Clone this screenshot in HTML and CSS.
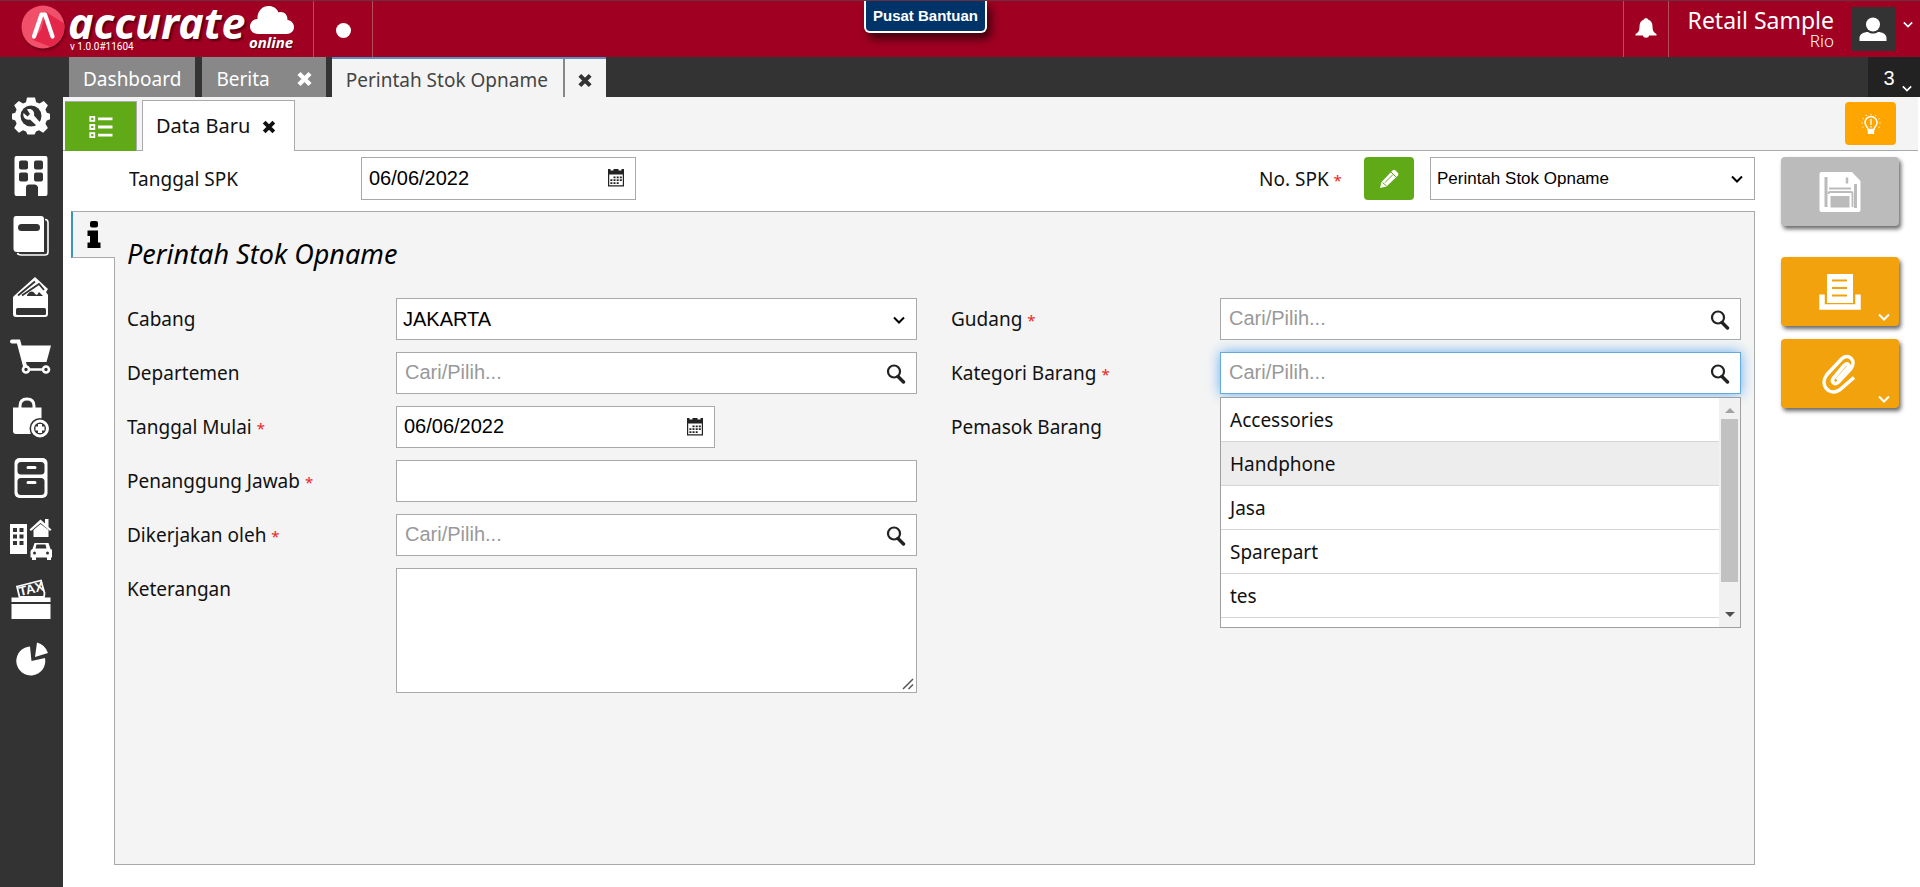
FILE: index.html
```html
<!DOCTYPE html>
<html lang="id">
<head>
<meta charset="utf-8">
<title>Accurate Online - Perintah Stok Opname</title>
<meta name="viewport" content="width=device-width, initial-scale=1">
<link rel="stylesheet" href="styles.css">
</head>
<body>
<svg class="sprite" aria-hidden="true">
  <symbol id="i-chevron" viewBox="0 0 12 8"><path d="M1 1.5 6 6.5 11 1.5" fill="none" stroke="currentColor" stroke-width="2"/></symbol>
  <symbol id="i-search" viewBox="0 0 20 20"><circle cx="8" cy="7.5" r="6" fill="none" stroke="currentColor" stroke-width="2.2"/><path d="M12 12.5 17.5 18" stroke="currentColor" stroke-width="3.4" stroke-linecap="round"/></symbol>
  <symbol id="i-close" viewBox="0 0 16 16"><path d="M2.500 2.500 13.500 13.500M13.500 2.500 2.500 13.500" stroke="currentColor" stroke-width="4.400"/></symbol>
  <symbol id="i-calendar" viewBox="0 0 18 19"><path d="M1 1h2.500v1.500h3V1h5v1.500h3V1H17v17.500H1zM2.200 6.500v10.800h13.600V6.500z" fill="currentColor" fill-rule="evenodd"/><path d="M6.500 8.500h2v1.800h-2zM9.700 8.500h2v1.800h-2zM12.800 8.500h2v1.800h-2zM3.400 11.300h2v1.800h-2zM6.500 11.300h2v1.800h-2zM9.700 11.300h2v1.800h-2zM12.800 11.300h2v1.800h-2zM3.400 14.200h2V16h-2zM6.500 14.200h2V16h-2zM9.700 14.200h2V16h-2z" fill="currentColor"/></symbol>
</svg>

<header class="topbar">
  <a class="logo" href="#" aria-label="Accurate Online">
    <svg class="logo-mark" viewBox="0 0 44 44"><defs><clipPath id="disc"><circle cx="22" cy="22" r="21.500"/></clipPath></defs><g clip-path="url(#disc)"><path d="M0 0h44v44H0z" fill="#f0506a"/><path d="M25 7 44 19v16l-9 9-23-9 8-10z" fill="#e3264a"/></g><path d="M13 31.500 20.500 9.500h3.500L31.500 31.500" fill="none" stroke="#fff" stroke-width="4.200" stroke-linecap="round" stroke-linejoin="round"/></svg>
    <span class="logo-words"><span class="logo-name">accurate</span><span class="logo-version">v 1.0.0#11604</span></span>
    <span class="logo-side"><svg class="logo-cloud" viewBox="0 0 46 30"><path d="M9.500 29C4 29 1 25.500 1 21.500 1 17 4.500 14 8.500 14 8 6 13.500 1 19.500 1c5 0 8.500 2.500 10 6.500 5-1.500 9 1.500 9 7.500 4 .5 6.500 3.500 6.500 7 0 4-3 7-7.500 7z" fill="#fff"/></svg><span class="logo-online">online</span></span>
  </a>
  <div class="status"><span class="status-dot"></span></div>
  <button class="help" type="button">Pusat Bantuan</button>
  <button class="bell" type="button" aria-label="Notifikasi"><svg width="22" height="22" viewBox="0 0 22 22"><path d="M9 2.500C9 .8 13 .8 13 2.500c3 1 4.500 3.500 4.500 7 0 4 1 6 4 7.500v1.500H14c0 3-6 3-6 0H.5V17c3-1.500 4-3.500 4-7.500 0-3.500 1.500-6 4.500-7z" fill="#fff"/></svg></button>
  <div class="account"><span class="account-company">Retail Sample</span><span class="account-user">Rio</span></div>
  <button class="avatar" type="button" aria-label="Akun"><svg width="28" height="24" viewBox="0 0 28 24"><circle cx="14" cy="7.500" r="7" fill="#fff"/><path d="M.5 24v-3C.5 17 5 15 9 15c3 2 7 2 10 0 4 0 8.500 2 8.500 6v3z" fill="#fff"/></svg></button>
  <svg class="account-chevron" width="10" height="7"><use href="#i-chevron"/></svg>
</header>

<div class="shell">
  <nav class="sidebar" aria-label="Modul">
    <a href="#" aria-label="Pengaturan"><svg viewBox="0 0 42 42"><path d="M17 3.500h8l1.200 4.700 3.300 1.400 4.200-2.500 4.200 4.200-2.500 4.200 1.400 3.300 3.200 1v5.400l-3.200 1.300-1.400 3.300 2.500 4.200-4.700 4.700-4.200-2.500-3 1.200-1.400 3.100h-7.200L16 37.400l-3-1.200-4.200 2.500L4.200 34l2.400-4.200-1.300-3.300L2 25.200v-5.400l3.300-1 1.300-3.300-2.400-4.200 4.600-4.200L13 9.600l3-1.400z" fill="#fff"/><circle cx="21" cy="22" r="10.500" fill="#333"/><path d="M17 15.500c4-1.500 8 1.500 7 6l7.500 8.500-3.500 3-8-7.500c-4.500 1-7.500-2.500-6.500-6.500l4 3.500 2.500-2.500z" fill="#fff"/></svg></a>
    <a href="#" aria-label="Perusahaan"><svg viewBox="0 0 42 42"><path d="M6.500 1h29q2 0 2 2v36q0 2-2 2H28v-9q-1-2.500-3-2.500h-6q-3 0-3 3V41H6.500q-2 0-2-2V3q0-2 2-2z" fill="#fff"/><g fill="#333"><rect x="9" y="5.500" width="9" height="9" rx="2"/><rect x="24" y="5.500" width="9" height="9" rx="2"/><rect x="9" y="17.500" width="9" height="9" rx="2"/><rect x="24" y="17.500" width="9" height="9" rx="2"/></g></svg></a>
    <a href="#" aria-label="Buku Besar"><svg viewBox="0 0 42 42"><path d="M6 1h25q3 0 3 3v33H7q-3.500 0-3.500-3.500V4q0-3 2.500-3z" fill="#fff"/><path d="M35 4.500q3 0 3 3V37q0 3-3 3H11q-3 0-3.500-2" fill="none" stroke="#fff" stroke-width="1.600"/><rect x="8" y="9" width="22" height="7" rx="3.500" fill="#333"/></svg></a>
    <a href="#" aria-label="Kas dan Bank"><svg viewBox="0 0 42 42"><path d="M5 19 25 1l13 12-2 3 2 3v19q0 3-3 3H6q-3 0-3-3V21z" fill="#fff"/><path d="M8 19.500 25 5.500M12 19.500 29 8l5 6" fill="none" stroke="#333" stroke-width="1.800"/><path d="M17 19c3-5 7-4 8-1l2 1 2-3 4 4H17z" fill="#333"/><rect x="6" y="32" width="30" height="7" rx="1.500" fill="#333"/></svg></a>
    <a href="#" aria-label="Penjualan"><svg viewBox="0 0 42 42"><path d="M2 5.500h6.500L15 30" fill="none" stroke="#fff" stroke-width="4" stroke-linecap="round"/><path d="M10 9.500h31L36.500 26H15z" fill="#fff"/><path d="M17 33.500h20" stroke="#fff" stroke-width="2.500"/><circle cx="16" cy="33.500" r="3" fill="#333" stroke="#fff" stroke-width="2.600"/><circle cx="36" cy="33.500" r="3" fill="#333" stroke="#fff" stroke-width="2.600"/></svg></a>
    <a href="#" aria-label="Pembelian"><svg viewBox="0 0 42 42"><path d="M10 12v-3q0-7 7-7t7 7v3" fill="none" stroke="#fff" stroke-width="3"/><path d="M3 10.500h28.500V26L22 37H6q-3 0-3-3z" fill="#fff"/><circle cx="30" cy="31.500" r="10.500" fill="#333"/><circle cx="30" cy="31.500" r="7.500" fill="#333" stroke="#fff" stroke-width="3"/><path d="M30 27v9M25.500 31.500h9" stroke="#fff" stroke-width="4"/></svg></a>
    <a href="#" aria-label="Persediaan"><svg viewBox="0 0 42 42"><rect x="4.500" y="1" width="33" height="40" rx="5" fill="#fff"/><rect x="7.500" y="5" width="27" height="12.500" rx="3.500" fill="#333"/><rect x="7.500" y="21" width="27" height="17" rx="3.500" fill="#333"/><path d="M18 10.500h7M18 25.500h7" stroke="#fff" stroke-width="3" stroke-linecap="round"/></svg></a>
    <a href="#" aria-label="Aset Tetap"><svg viewBox="0 0 42 42"><path d="M0 6h17v30H0z" fill="#fff"/><path d="M3 10h4v4H3zM9.500 10h4v4h-4zM3 16.500h4v4H3zM9.500 16.500h4v4h-4zM3 23h4v4H3zM9.500 23h4v4h-4z" fill="#333"/><path d="m19.500 11.500 11-10 4.500 4V1h3.500v8l3 2.500-1.500 1.500-9.500-8-9.500 8z" fill="#fff"/><path d="m23.500 12 7-6 8 6v7h-15z" fill="#fff"/><path d="m24.500 25-2 6q-2 .5-2 2.500v6H22v3h4v-3h11v3h4v-3h1.500v-6q0-2-2-2.500l-2-6z" fill="#fff"/><path d="m26.500 26.500-1 4h11l-1-4z" fill="#333"/><circle cx="24.500" cy="35" r="1.500" fill="#333"/><circle cx="37.500" cy="35" r="1.500" fill="#333"/></svg></a>
    <a href="#" aria-label="Pajak"><svg viewBox="0 0 42 42"><path d="M1.500 19.500h39V24h-39zM1.500 26h39v15h-39z" fill="#fff"/><path d="m7 8.500 24-6 3.500 12.500-.5 4H9.500z" fill="none" stroke="#fff" stroke-width="1.800"/><text class="tax" x="10" y="18" transform="rotate(-13 10 18)">TAX</text></svg></a>
    <a href="#" aria-label="Laporan"><svg viewBox="0 0 42 42"><path d="M20 7.500 21.500 22l13.500-3A14.500 14.500 0 1 1 20 7.500z" fill="#fff"/><path d="m25 18 2-14.500q8 2 11 10.500z" fill="#fff"/></svg></a>
  </nav>

  <div class="workspace">
    <div class="tabs">
      <a class="tab" href="#">Dashboard</a>
      <div class="tab tab-closable"><a href="#">Berita</a><button type="button" aria-label="Tutup Berita"><svg width="17" height="16"><use href="#i-close"/></svg></button></div>
      <div class="tab-active"><a href="#">Perintah Stok Opname</a><button type="button" aria-label="Tutup Perintah Stok Opname"><svg width="16" height="15"><use href="#i-close"/></svg></button></div>
      <button class="tab-count" type="button"><span>3</span><svg width="10" height="7"><use href="#i-chevron"/></svg></button>
    </div>

    <div class="subtabs">
      <button class="list-button" type="button" aria-label="Daftar"><svg width="24" height="24" viewBox="0 0 24 24"><path d="M1.300 1.800h4v4h-4zM1.300 10h4v4h-4zM1.300 18.200h4v4h-4z" fill="none" stroke="#fff" stroke-width="1.800"/><path d="M9 3.800h14.500M9 12h14.500M9 20.200h14.500" stroke="#fff" stroke-width="2.800"/></svg></button>
      <div class="subtab"><a href="#">Data Baru</a><button type="button" aria-label="Tutup Data Baru"><svg width="14" height="14"><use href="#i-close"/></svg></button></div>
      <button class="tip" type="button" aria-label="Petunjuk"><svg width="20" height="20" viewBox="0 0 20 20"><path d="M7 15.500c0-2.500-3-3.500-3-7a6 6 0 0 1 12 0c0 3.500-3 4.500-3 7z" fill="none" stroke="#fff" stroke-width="1.500"/><path d="M7.500 16h5v3.500h-5zM10 5v6M10 12v1.500" fill="#fff" stroke="#fff" stroke-width="1.300"/><path d="M10 0v1M5 1l.6 1M15 1l-.6 1M1.500 4.500l1 .6M18.500 4.500l-1 .6M.5 9h1.200M19.500 9h-1.200M1.500 13.500l1-.6M18.500 13.500l-1-.6" stroke="#fff"/></svg></button>
    </div>

    <div class="body">
      <main class="form">
        <div class="form-head">
          <label for="tanggal-spk">Tanggal SPK</label>
          <div class="field field-date"><input id="tanggal-spk" type="text" value="06/06/2022"><svg class="icon-calendar" width="18" height="19"><use href="#i-calendar"/></svg></div>
          <label class="spk-label" for="no-spk">No. SPK <span class="req">*</span></label>
          <button class="edit" type="button" aria-label="Ubah nomor"><svg width="22" height="22" viewBox="0 0 22 22"><path d="m2 20 1.500-6L14.500 2.500q1-1 2.500-.5l3 3q.8 1.200 0 2.500L8.500 18.500z" fill="#fff"/><path d="m4.500 14.500 4 3.500M7 14.500 15 6.500M13 4l5 5" stroke="#60a917" fill="none"/></svg></button>
          <div class="field field-spk"><select id="no-spk"><option>Perintah Stok Opname</option></select><svg class="icon-chevron" width="12" height="8"><use href="#i-chevron"/></svg></div>
        </div>

        <div class="card">
          <a class="info-tab" href="#" aria-label="Informasi"><svg width="14" height="27" viewBox="0 0 14 27"><rect x="3" width="8" height="6.500" rx="2"/><path d="M1 9.500h10v12h2.500V27H.5v-5.500H3v-6.500H.5V9.500z"/></svg></a>
          <section class="panel">
            <h1>Perintah Stok Opname</h1>
            <div class="columns">
              <div class="column">
                <label for="cabang">Cabang</label>
                <div class="field"><select class="large" id="cabang"><option>JAKARTA</option></select><svg class="icon-chevron" width="12" height="8"><use href="#i-chevron"/></svg></div>
                <label for="departemen">Departemen</label>
                <div class="field"><input id="departemen" type="text" placeholder="Cari/Pilih..."><svg class="icon-search" width="20" height="20"><use href="#i-search"/></svg></div>
                <label for="tanggal-mulai">Tanggal Mulai <span class="req">*</span></label>
                <div class="field field-start"><input id="tanggal-mulai" type="text" value="06/06/2022"><svg class="icon-calendar" width="18" height="19"><use href="#i-calendar"/></svg></div>
                <label for="penanggung">Penanggung Jawab <span class="req">*</span></label>
                <div class="field"><input id="penanggung" type="text"></div>
                <label for="dikerjakan">Dikerjakan oleh <span class="req">*</span></label>
                <div class="field"><input id="dikerjakan" type="text" placeholder="Cari/Pilih..."><svg class="icon-search" width="20" height="20"><use href="#i-search"/></svg></div>
                <label for="keterangan">Keterangan</label>
                <div class="field field-note"><textarea id="keterangan"></textarea><svg class="grip" width="12" height="12" viewBox="0 0 12 12"><path d="M1 11 11 1M6.500 11 11 6.500" stroke="currentColor" stroke-width="1.500"/></svg></div>
              </div>
              <div class="column">
                <label for="gudang">Gudang <span class="req">*</span></label>
                <div class="field"><input id="gudang" type="text" placeholder="Cari/Pilih..."><svg class="icon-search" width="20" height="20"><use href="#i-search"/></svg></div>
                <label for="kategori">Kategori Barang <span class="req">*</span></label>
                <div class="field">
                  <input class="focused" id="kategori" type="text" placeholder="Cari/Pilih..."><svg class="icon-search" width="20" height="20"><use href="#i-search"/></svg>
                  <div class="menu">
                    <ul class="options">
                      <li>Accessories</li>
                      <li class="hovered">Handphone</li>
                      <li>Jasa</li>
                      <li>Sparepart</li>
                      <li>tes</li>
                    </ul>
                    <div class="scroll"><span class="arrow-up"></span><span class="thumb"></span><span class="arrow-down"></span></div>
                  </div>
                </div>
                <span class="label">Pemasok Barang</span>
              </div>
            </div>
          </section>
        </div>
      </main>

      <aside class="actions">
        <button class="action action-save" type="button" aria-label="Simpan"><svg width="42" height="42" viewBox="0 0 42 42"><path d="M2.500 1H33L41.500 10v29q0 2-2 2h-37q-2 0-2-2V3q0-2 2-2z" fill="#fff"/><path d="M7 6v30M36.500 13v24" stroke="#bbb" stroke-width="3"/><path d="M10 17.500h22M9.500 23v-1q0-1 2-1h20q2 0 2 1.500V36" fill="none" stroke="#bbb" stroke-width="1.800"/><path d="M28 6.500v6" stroke="#bbb" stroke-width="2.500"/><rect x="11.500" y="25" width="19" height="11.500" fill="#bbb"/></svg></button>
        <button class="action action-print" type="button" aria-label="Cetak"><svg width="42" height="36" viewBox="0 0 42 36"><path d="M8 0h26v29H8z" fill="#fff"/><path d="M13 6.500h15M13 14h15M13 21.500h15" stroke="#f2a20c" stroke-width="2"/><path d="M3 20.500v12.500h36V20.500" fill="none" stroke="#fff" stroke-width="5.500"/></svg><svg class="action-more" width="12" height="8"><use href="#i-chevron"/></svg></button>
        <button class="action action-attach" type="button" aria-label="Lampiran"><svg width="40" height="42" viewBox="0 0 40 42"><path d="M24.500 12 13.500 25c-3 4 1.500 7.500 5 4L31 15.500c6-8-3-16-9.500-9.500L7 21.500C-1 32 9 43.500 19.500 37L34 24.500M24.500 12c3-2.500 5.500 0 3.500 2.500L17 27" fill="none" stroke="#fff" stroke-width="3.600"/></svg><svg class="action-more" width="12" height="8"><use href="#i-chevron"/></svg></button>
      </aside>
    </div>
  </div>
</div>
</body>
</html>
```

FILE: styles.css
```css
* { box-sizing: border-box; }

body {
  margin: 0;
  min-height: 100vh;
  display: flex;
  flex-direction: column;
  background: #fff;
  color: #111;
  font: 19px/26px "Noto Sans", "Open Sans", sans-serif;
}

a { color: inherit; text-decoration: none; }
button { border: 0; padding: 0; background: none; color: inherit; font: inherit; cursor: pointer; }
svg { display: block; }
.sprite { position: absolute; width: 0; height: 0; }

/* Top bar */
.topbar {
  position: relative;
  display: flex;
  height: 57px;
  background: #a00022;
  border-top: 1px solid #6e3040;
  color: #fff;
}
.logo {
  display: flex;
  width: 314px;
  padding: 4px 0 0 21px;
  border-right: 1px solid #b94a60;
}
.logo-mark { width: 44px; height: 44px; flex: none; filter: drop-shadow(1px 2px 1px #0005); }
.logo-words { display: flex; flex-direction: column; margin-left: 3px; width: 181px; }
.logo-name {
  font: italic 700 43px/36px "Noto Sans", sans-serif;
  text-shadow: 2px 2px 2px #0007;
}
.logo-version { padding-left: 2px; font: 10px/12px Roboto, sans-serif; }
.logo-side { display: flex; flex-direction: column; }
.logo-cloud { width: 46px; height: 30px; }
.logo-online { font: italic 700 15px/14px "Noto Sans", sans-serif; text-shadow: 1px 1px 1px #0007; }
.status { display: flex; align-items: center; justify-content: center; width: 59px; border-right: 1px solid #b94a60; }
.status-dot { width: 15px; height: 15px; margin-top: 3px; border-radius: 50%; background: #fff; }
.help {
  position: absolute;
  left: 45%;
  top: 0;
  width: 123px;
  height: 32px;
  border: 2px solid #fff;
  border-top: 0;
  border-radius: 0 0 6px 6px;
  background: #003468;
  box-shadow: 4px 6px 8px #0009;
  color: #fff;
  font: bold 15px/20px "Liberation Sans", Arial, sans-serif;
}
.bell {
  display: flex;
  align-items: center;
  justify-content: center;
  width: 46px;
  margin-left: auto;
  padding-bottom: 2px;
  border: solid #b94a60;
  border-width: 0 1px;
}
.account { display: flex; flex-direction: column; align-items: flex-end; width: 165px; padding: 5px 0 0; }
.account-company { font-size: 23px; line-height: 28px; }
.account-user { font-size: 17px; line-height: 14px; font-weight: 300; }
.avatar { display: flex; align-items: center; justify-content: center; width: 44px; height: 44px; margin: 6px 0 0 17px; background: #333; }
.account-chevron { align-self: flex-start; margin: 20px 7px 0 8px; }

/* Sidebar */
.shell { flex: 1; display: flex; }
.sidebar { display: flex; flex-direction: column; gap: 18px; width: 63px; flex: none; padding: 37px 10px 0; background: #333; }
.sidebar svg { width: 42px; height: 42px; }
.sidebar a:nth-child(even) { margin-top: 1px; }
.tax { font: bold 13px "Liberation Sans", Arial, sans-serif; fill: #fff; }

/* Document tabs */
.workspace { flex: 1; min-width: 0; display: flex; flex-direction: column; }
.tabs { display: flex; height: 40px; padding-left: 6px; background: #333; color: #fff; }
.tab { padding: 9px 14px 0; margin-right: 7px; background: #888; }
.tab-closable { display: flex; align-items: flex-start; gap: 26px; margin-right: 6px; padding: 9px 13px 0 14px; }
.tab button { display: flex; align-items: center; height: 26px; }
.tab-active { display: flex; border-top: 2px solid #5b8fbe; background: #f4f4f4; color: #444; }
.tab-active a { padding: 8px 15px 0 14px; border-right: 2px solid #888; }
.tab-active button { width: 41px; display: flex; align-items: center; justify-content: center; padding-top: 4px; color: #333; }
.tab-count { position: relative; width: 52px; margin-left: auto; padding: 2px 10px 0 0; background: #222; font: 20px/26px "Liberation Sans", Arial, sans-serif; }
.tab-count svg { position: absolute; right: 8px; bottom: 5px; }

/* Page tabs */
.subtabs { display: flex; align-items: flex-end; height: 54px; margin-right: 2px; padding-left: 2px; border-bottom: 1px solid #aaa; background: #f4f4f4; }
.list-button { display: flex; align-items: center; justify-content: center; width: 72px; height: 50px; margin: 0 5px -1px 0; border: 1px solid #aaa; border-width: 1px 1px 0 0; background: #60a917; }
.subtab { display: flex; align-items: flex-start; gap: 12px; height: 51px; margin-bottom: -1px; padding: 11px 18px 0 13px; border: 1px solid #aaa; border-bottom: 0; background: #fff; font-size: 20px; line-height: 28px; }
.subtab button { display: flex; align-items: center; height: 30px; }
.tip { display: flex; align-items: center; justify-content: center; align-self: flex-start; width: 51px; height: 43px; margin: 5px 22px 0 auto; border-radius: 4px; background: #ffa500; }

/* Form */
.body { flex: 1; display: flex; padding: 6px 21px 22px 8px; }
.form { flex: 1; min-width: 0; display: flex; flex-direction: column; }
.form-head { display: flex; padding-left: 58px; height: 43px; margin-bottom: 11px; }
.form-head label { padding-top: 9px; width: 232px; }
.form-head .spk-label { width: 105px; margin-left: auto; }
.form-head .field { height: 43px; }
.req { color: #e22; font-size: 15px; }
.edit { display: flex; align-items: center; justify-content: center; width: 50px; margin-right: 16px; border-radius: 4px; background: #60a917; }

.field { position: relative; height: 42px; }
.field-date { width: 275px; }
.field-spk { width: 325px; }
.field-start { width: 319px; }
.field-note { height: 125px; }
.field svg { position: absolute; color: #222; }
.field .icon-search { right: 11px; top: 12px; }
.field .icon-calendar { right: 11px; top: 11px; }
.field .icon-chevron { right: 12px; top: 18px; color: #000; }
.field .grip { right: 3px; bottom: 3px; color: #555; pointer-events: none; }

input, select, textarea {
  display: block;
  width: 100%;
  height: 100%;
  margin: 0;
  padding: 0 40px 1px 7px;
  border: 1px solid #a9a9a9;
  border-radius: 0;
  background: #fff;
  color: #000;
  font: 20px/26px "Liberation Sans", Arial, sans-serif;
  outline: 0;
}
input::placeholder { color: #999; opacity: 1; }
input[placeholder] { padding-left: 8px; }
select { appearance: none; padding: 0 30px 0 6px; font-size: 17px; }
select.large { font-size: 20px; }
textarea { resize: none; }
.focused { border-color: #66a9dc; box-shadow: 0 0 12px #66aff0; }

.card { flex: 1; display: flex; align-items: stretch; }
.info-tab { position: relative; display: flex; align-items: center; justify-content: center; width: 44px; height: 47px; flex: none; margin-right: -1px; border: 1px solid #aaa; border-left: 2px solid #3a95b8; border-right: 0; background: #f4f4f4; }
.panel { flex: 1; min-width: 0; padding: 22px 13px 20px 12px; border: 1px solid #aaa; background: #f4f4f4; }
h1 { margin: 0 0 24px; font: italic 400 27px/40px "Noto Sans", "Open Sans", sans-serif; color: #000; }
.columns { display: grid; grid-template-columns: 1fr 1fr; gap: 34px; }
.column { display: grid; grid-template-columns: 269px 1fr; row-gap: 12px; align-content: start; }
.column label, .label { padding-top: 8px; height: 42px; }

/* Suggestion menu */
.menu { position: absolute; z-index: 2; top: 45px; left: 0; right: 0; display: flex; height: 231px; border: 1px solid #a0a0a0; background: #fff; }
.options { flex: 1; margin: 0; padding: 0; list-style: none; }
.options li { height: 44px; padding: 9px 9px 0; border-bottom: 1px solid #d5d5d5; }
.options .hovered { background: #ededed; }
.scroll { display: flex; flex-direction: column; align-items: center; width: 21px; padding: 10px 0; background: #f1f1f1; }
.arrow-up, .arrow-down { border: 5px solid transparent; }
.arrow-up { border-top: 0; border-bottom-color: #a3a3a3; }
.arrow-down { margin-top: auto; border-bottom: 0; border-top-color: #505050; }
.thumb { width: 17px; height: 163px; margin-top: 6px; background: #c1c1c1; }

/* Actions */
.actions { display: flex; flex-direction: column; gap: 13px; width: 118px; margin-left: 26px; flex: none; }
.action { position: relative; display: flex; align-items: center; justify-content: center; height: 69px; border-radius: 4px; background: #f2a20c; box-shadow: 2px 3px 4px #0009; color: #fff; }
.action-save { background: #bbb; margin-bottom: 18px; }
.action-more { position: absolute; right: 9px; bottom: 5px; }
```
